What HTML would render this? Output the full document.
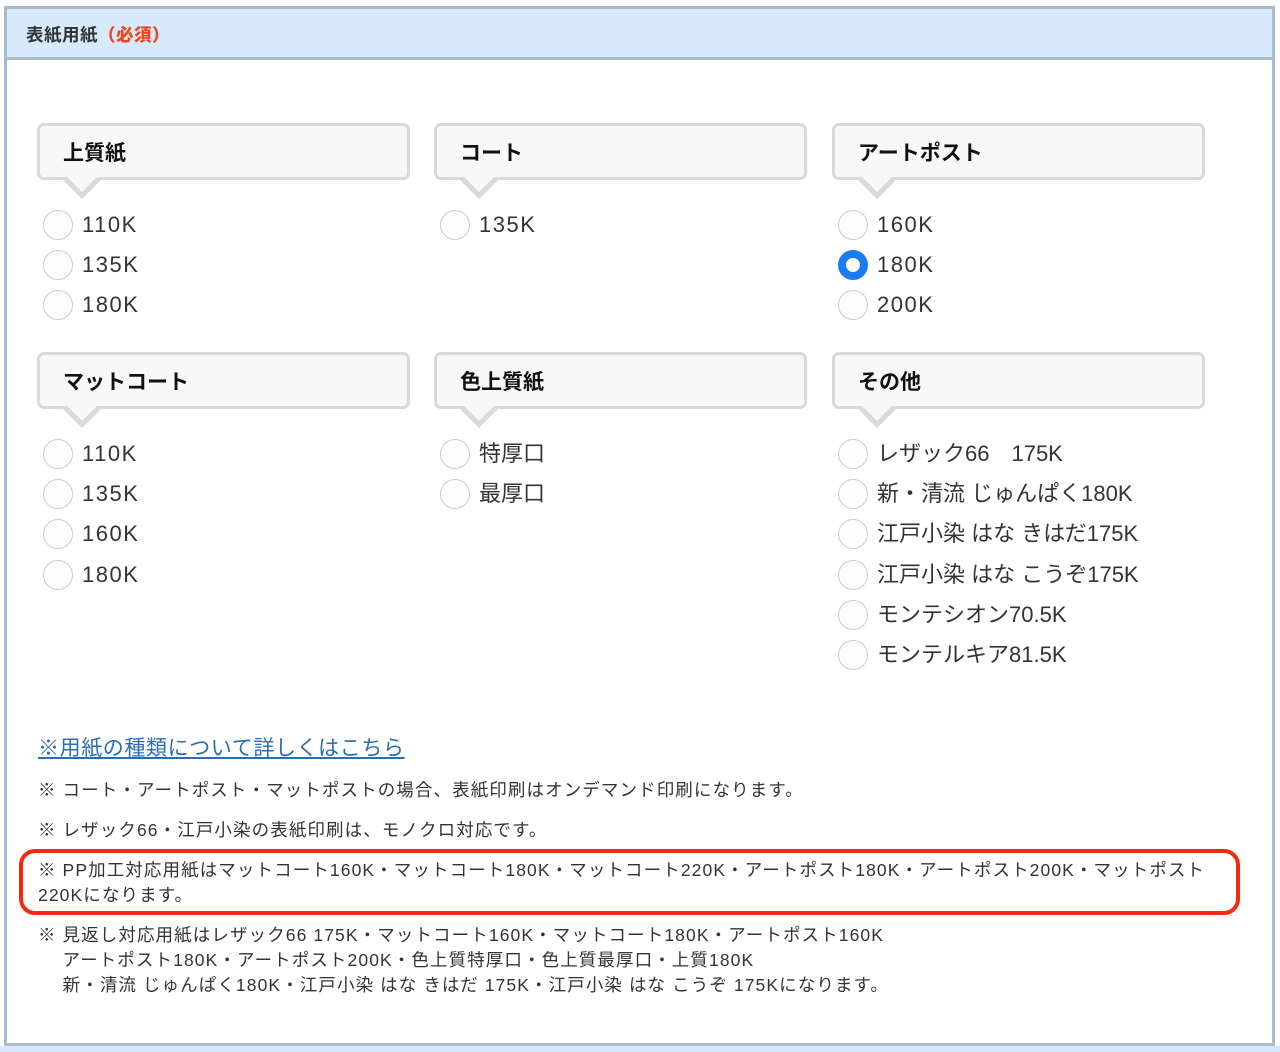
<!DOCTYPE html>
<html><head><meta charset="utf-8"><style>
*{margin:0;padding:0;box-sizing:border-box}
body{width:1280px;height:1052px;background:#fff;position:relative;overflow:hidden;font-family:"Liberation Sans","Noto Sans CJK JP",sans-serif;color:#333}
.frame{position:absolute;left:4px;top:6px;width:1271px;height:1040px;border:3px solid #a9bbcc}
.hdr{position:absolute;left:7px;top:9px;width:1265px;height:51px;background:#d6eafc;border-bottom:3px solid #a9bbcc}
.hdr span{position:absolute;left:19px;top:13px;font-size:17.5px;letter-spacing:.5px;font-weight:bold;color:#333}
.hdr b{color:#f0461e}
.foot{position:absolute;left:0;top:1046px;width:1280px;height:6px;background:#d6eafc}
.box{position:absolute;width:373px;height:57px;background:#f8f8f8;border:3px solid #d9d9d9;border-radius:7px}
.box span{position:absolute;left:23px;top:11px;font-size:21px;font-weight:bold;color:#111}
.box:before{content:"";position:absolute;left:23px;top:54px;width:0;height:0;border-left:19px solid transparent;border-right:19px solid transparent;border-top:19px solid #d9d9d9}
.box:after{content:"";position:absolute;left:27px;top:51px;width:0;height:0;border-left:15px solid transparent;border-right:15px solid transparent;border-top:15px solid #f8f8f8}
.r{position:absolute;font-size:22px;color:#333;height:30px;line-height:30px;white-space:nowrap}
.r.k{letter-spacing:1.5px}
.r:before{content:"";position:absolute;left:-39px;top:0;width:30px;height:30px;border-radius:50%;border:1.5px solid #ccc;background:#fdfdfd;box-sizing:border-box}
.r.on:before{background:#fff;border:8.5px solid #1a7cf5}
.n{position:absolute;left:38px;font-size:17.5px;letter-spacing:1.1px;color:#333;line-height:25px;white-space:nowrap}
a{position:absolute;left:38px;top:732px;font-size:21px;letter-spacing:.6px;color:#2a6db5;text-decoration:underline}
.red{position:absolute;left:19px;top:849px;width:1221px;height:66px;border:4px solid #f42a10;border-radius:16px}
</style></head><body>
<div class="frame"></div>
<div class="hdr"><span>表紙用紙<b>（必須）</b></span></div>
<div class="foot"></div>

<div class="box" style="left:37px;top:123px"><span>上質紙</span></div>
<div class="box" style="left:434px;top:123px"><span>コート</span></div>
<div class="box" style="left:832px;top:123px"><span>アートポスト</span></div>
<div class="box" style="left:37px;top:352px"><span>マットコート</span></div>
<div class="box" style="left:434px;top:352px"><span>色上質紙</span></div>
<div class="box" style="left:832px;top:352px"><span>その他</span></div>

<div class="r k" style="left:82px;top:210px">110K</div>
<div class="r k" style="left:82px;top:250px">135K</div>
<div class="r k" style="left:82px;top:290px">180K</div>
<div class="r k" style="left:479px;top:210px">135K</div>
<div class="r k" style="left:877px;top:210px">160K</div>
<div class="r k on" style="left:877px;top:250px">180K</div>
<div class="r k" style="left:877px;top:290px">200K</div>

<div class="r k" style="left:82px;top:439px">110K</div>
<div class="r k" style="left:82px;top:479px">135K</div>
<div class="r k" style="left:82px;top:519px">160K</div>
<div class="r k" style="left:82px;top:560px">180K</div>
<div class="r" style="left:479px;top:439px">特厚口</div>
<div class="r" style="left:479px;top:479px">最厚口</div>
<div class="r" style="left:877px;top:439px">レザック66　175K</div>
<div class="r" style="left:877px;top:479px">新・清流 じゅんぱく180K</div>
<div class="r" style="left:877px;top:519px">江戸小染 はな きはだ175K</div>
<div class="r" style="left:877px;top:560px">江戸小染 はな こうぞ175K</div>
<div class="r" style="left:877px;top:600px">モンテシオン70.5K</div>
<div class="r" style="left:877px;top:640px">モンテルキア81.5K</div>

<a>※用紙の種類について詳しくはこちら</a>
<div class="n" style="top:778px">※ コート・アートポスト・マットポストの場合、表紙印刷はオンデマンド印刷になります。</div>
<div class="n" style="top:818px">※ レザック66・江戸小染の表紙印刷は、モノクロ対応です。</div>
<div class="red"></div>
<div class="n" style="top:858px">※ PP加工対応用紙はマットコート160K・マットコート180K・マットコート220K・アートポスト180K・アートポスト200K・マットポスト<br>220Kになります。</div>
<div class="n" style="top:923px">※ 見返し対応用紙はレザック66 175K・マットコート160K・マットコート180K・アートポスト160K<br>　 アートポスト180K・アートポスト200K・色上質特厚口・色上質最厚口・上質180K<br>　 新・清流 じゅんぱく180K・江戸小染 はな きはだ 175K・江戸小染 はな こうぞ 175Kになります。</div>
</body></html>
